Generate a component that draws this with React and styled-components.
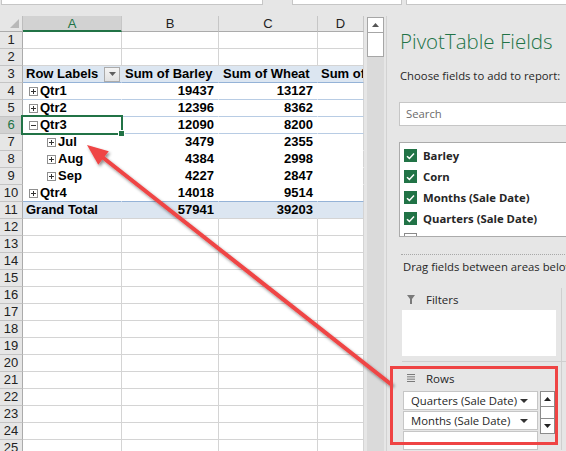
import React from 'react';
import styled, { createGlobalStyle } from 'styled-components';

const Global = createGlobalStyle`
  html, body { margin: 0; padding: 0; background: #e6e6e6; }
  body { font-family: "Liberation Sans", Arial, sans-serif; }
  #root { width: 566px; height: 451px; overflow: hidden; }
`;

const Screen = styled.div`
  position: relative;
  width: 566px;
  height: 451px;
  overflow: hidden;
  background: #e6e6e6;
`;

const TopStrip = styled.div`
  height: 16px;
  display: flex;
  align-items: flex-start;
`;

const FormulaBox = styled.div`
  box-sizing: border-box;
  height: 5px;
  width: ${p => p.$w}px;
  margin-left: ${p => p.$gap}px;
  background: #fff;
  border: 1px solid #c6c6c6;
  border-top: none;
  flex-shrink: 0;
`;

const Body = styled.div`
  display: flex;
  height: 435px;
`;

const Sheet = styled.div`
  width: 364px;
  height: 435px;
  flex-shrink: 0;
  overflow: hidden;
  display: grid;
  grid-template-columns: 23px 99px 97px 99px 46px;
  grid-template-rows: 16px;
  grid-auto-rows: 17px;
  background: #fff;
`;

const Corner = styled.div`
  box-sizing: border-box;
  background: #e6e6e6;
  border-right: 1px solid #bdbdbd;
  border-bottom: 1px solid #ababab;
  display: flex;
  align-items: flex-end;
  justify-content: flex-end;
  padding: 0 3px 3px 0;
`;

const ColHeader = styled.div`
  box-sizing: border-box;
  background: ${p => (p.$selected ? '#d2d2d2' : '#e6e6e6')};
  border-right: 1px solid #c6c6c6;
  border-bottom: ${p => (p.$selected ? '2px solid #217346' : '1px solid #ababab')};
  color: ${p => (p.$selected ? '#217346' : '#222')};
  font: 13px "Liberation Sans", Arial, sans-serif;
  display: flex;
  align-items: center;
  justify-content: center;
  padding-top: ${p => (p.$selected ? '1px' : '0')};
  overflow: hidden;
`;

const RowHeader = styled.div`
  box-sizing: border-box;
  background: ${p => (p.$selected ? '#d2d2d2' : '#e6e6e6')};
  border-right: 1px solid ${p => (p.$selected ? '#217346' : '#ababab')};
  border-bottom: 1px solid #c4c4c4;
  color: ${p => (p.$selected ? '#217346' : '#222')};
  font: 13px "Liberation Sans", Arial, sans-serif;
  display: flex;
  align-items: center;
  justify-content: center;
  line-height: 16px;
`;

const Cell = styled.div`
  box-sizing: border-box;
  position: relative;
  display: flex;
  align-items: center;
  justify-content: ${p => (p.$right ? 'flex-end' : 'flex-start')};
  padding: ${p => (p.$right ? '0 4px 0 0' : `0 0 0 ${p.$pad}px`)};
  background: ${p => p.$bg};
  border-right: 1px solid ${p => p.$vline};
  border-bottom: 1px solid ${p => p.$hline};
  font: ${p => (p.$bold ? 'bold' : 'normal')} 13px "Liberation Sans", Arial, sans-serif;
  color: #000;
  white-space: nowrap;
  overflow: ${p => (p.$clip ? 'hidden' : 'visible')};
  line-height: 16px;
`;

const Selection = styled.div`
  position: absolute;
  left: -2px;
  top: -2px;
  right: -2px;
  bottom: -2px;
  border: 2px solid #217346;
  z-index: 5;
  pointer-events: none;
  &::after {
    content: '';
    position: absolute;
    right: -4px;
    bottom: -4px;
    width: 5px;
    height: 5px;
    background: #217346;
    border: 1px solid #fff;
  }
`;

const LabelWrap = styled.div`
  display: flex;
  align-items: center;
  justify-content: space-between;
  width: 100%;
  padding-right: 1px;
`;

const FilterBtn = styled.div`
  box-sizing: border-box;
  width: 16px;
  height: 15px;
  background: linear-gradient(#f4f4f4, #e2e2e2);
  border: 1px solid #ababab;
  display: flex;
  align-items: center;
  justify-content: center;
`;

const ExpBox = styled.svg`
  width: 9px;
  height: 9px;
  margin-right: 2px;
  flex-shrink: 0;
`;

const ScrollCol = styled.div`
  width: 22px;
  flex-shrink: 0;
  padding: 1px 0 0 3px;
  box-sizing: border-box;
`;

const ScrollBar = styled.div`
  width: 17px;
  height: 100%;
  background: #dadada;
  display: flex;
  flex-direction: column;
`;

const ScrollBtn = styled.div`
  box-sizing: border-box;
  height: 16px;
  background: #fff;
  border: 1px solid #a6a6a6;
  display: flex;
  align-items: center;
  justify-content: center;
`;

const ScrollThumb = styled.div`
  box-sizing: border-box;
  height: 24px;
  background: #fff;
  border: 1px solid #a6a6a6;
  border-top: none;
`;

const Panel = styled.aside`
  width: 180px;
  box-sizing: border-box;
  border-left: 1px solid #d2d2d2;
  padding-left: 12px;
  display: flex;
  flex-direction: column;
  overflow: hidden;
  font-family: "Open Sans", "Noto Sans", sans-serif;
  color: #262626;
`;

const Title = styled.div`
  margin: 12px 0 0 1px;
  font-size: 20.5px;
  font-weight: 300;
  line-height: 26px;
  color: #217346;
  white-space: nowrap;
`;

const Subtitle = styled.div`
  margin: 14px 0 0 1px;
  font-size: 11.3px;
  line-height: 16px;
  white-space: nowrap;
`;

const Search = styled.div`
  box-sizing: border-box;
  margin-top: 18px;
  height: 24px;
  width: 180px;
  flex-shrink: 0;
  background: #fff;
  border: 1px solid #c6c6c6;
  display: flex;
  align-items: center;
  padding: 0 0 1px 6px;
  font-size: 11.3px;
  color: #6b6b6b;
`;

const FieldList = styled.div`
  box-sizing: border-box;
  margin-top: 16px;
  height: 95px;
  width: 180px;
  flex-shrink: 0;
  background: #fff;
  border: 1px solid #ababab;
  padding: 2px 0 0 4px;
  overflow: hidden;
`;

const FieldItem = styled.div`
  height: 21px;
  display: flex;
  align-items: center;
  gap: 6px;
  font-size: 11.3px;
  font-weight: 700;
  white-space: nowrap;
  color: ${p => (p.$checked ? '#262626' : '#555')};
`;

const Check = styled.div`
  box-sizing: border-box;
  width: 13px;
  height: 13px;
  flex-shrink: 0;
  background: ${p => (p.$checked ? '#217346' : '#fff')};
  border: 1px solid ${p => (p.$checked ? '#217346' : '#8a8a8a')};
  display: flex;
  align-items: center;
  justify-content: center;
`;

const Dotted = styled.div`
  margin: 17px 0 0 2px;
  width: 170px;
  border-top: 1px dotted #a8a8a8;
  flex-shrink: 0;
`;

const DragText = styled.div`
  margin: 4px 0 0 4px;
  line-height: 16px;
  font-size: 11.3px;
  white-space: nowrap;
`;

const Areas = styled.div`
  margin: 13px 0 0 3px;
  display: grid;
  grid-template-columns: 160px 20px;
  flex-shrink: 0;
`;

const FilterSection = styled.div`
  border-right: 1px solid #cfcfcf;
  border-bottom: 1px solid #cfcfcf;
  padding: 3px 0 5px 0;
`;

const RowsSection = styled.div`
  border-right: 1px solid #cfcfcf;
  padding-top: 8px;
  height: 88px;
  box-sizing: border-box;
`;

const SideArea = styled.div`
  border-bottom: ${p => (p.$line ? '1px solid #cfcfcf' : 'none')};
`;

const AreaHeader = styled.div`
  display: flex;
  align-items: center;
  height: 16px;
  padding-left: 5px;
  gap: 11px;
  font-size: 11.5px;
`;

const AreaBox = styled.div`
  margin-top: 3px;
  height: 46px;
  width: 154px;
  background: #fff;
`;

const RowsBody = styled.div`
  margin: 5px 0 0 1px;
  display: flex;
  gap: 2px;
`;

const PillStack = styled.div`
  display: flex;
  flex-direction: column;
  gap: 1px;
`;

const Pill = styled.div`
  box-sizing: border-box;
  width: 135px;
  height: 19px;
  background: #fff;
  border: 1px solid #c6c6c6;
  display: flex;
  align-items: center;
  justify-content: space-between;
  padding: 0 9px 0 7px;
  font-size: 11.3px;
  white-space: nowrap;
`;

const Spin = styled.div`
  width: 15px;
  display: flex;
  flex-direction: column;
`;

const SpinBtn = styled.div`
  box-sizing: border-box;
  height: 16px;
  background: #fff;
  border: 1px solid #8c8c8c;
  display: flex;
  align-items: center;
  justify-content: center;
`;

const SpinMid = styled.div`
  box-sizing: border-box;
  height: 11px;
  background: #fff;
  border-left: 1px solid #8c8c8c;
  border-right: 1px solid #8c8c8c;
`;

const Highlight = styled.div`
  position: absolute;
  left: 390px;
  top: 366px;
  width: 168px;
  height: 79px;
  box-sizing: border-box;
  border: 3px solid #ef4444;
  pointer-events: none;
`;

const ArrowLayer = styled.svg`
  position: absolute;
  left: 0;
  top: 0;
  width: 566px;
  height: 451px;
  pointer-events: none;
`;

const Tri = ({ up, color = '#444', w = 7, h = 4 }) => (
  <svg width={w} height={h} viewBox={`0 0 ${w} ${h}`}>
    <polygon points={up ? `0,${h} ${w},${h} ${w / 2},0` : `0,0 ${w},0 ${w / 2},${h}`} fill={color} />
  </svg>
);

const Expander = ({ open }) => (
  <ExpBox viewBox="0 0 9 9">
    <rect x="0.5" y="0.5" width="8" height="8" fill="#fff" stroke="#8f8f8f" />
    <line x1="2" y1="4.5" x2="7" y2="4.5" stroke="#333" />
    {!open && <line x1="4.5" y1="2" x2="4.5" y2="7" stroke="#333" />}
  </ExpBox>
);

const GRID = '#d4d4d4';
const BLUE_BG = '#dce6f1';

const rows = [
  { n: 1, kind: 'plain' },
  { n: 2, kind: 'plain' },
  { n: 3, kind: 'head', a: 'Row Labels', b: 'Sum of Barley', c: 'Sum of Wheat', d: 'Sum of' },
  { n: 4, kind: 'group', a: 'Qtr1', lvl: 0, b: 19437, c: 13127 },
  { n: 5, kind: 'group', a: 'Qtr2', lvl: 0, b: 12396, c: 8362 },
  { n: 6, kind: 'group', a: 'Qtr3', lvl: 0, open: true, sel: true, b: 12090, c: 8200 },
  { n: 7, kind: 'item', a: 'Jul', lvl: 1, b: 3479, c: 2355 },
  { n: 8, kind: 'item', a: 'Aug', lvl: 1, b: 4384, c: 2998 },
  { n: 9, kind: 'item', a: 'Sep', lvl: 1, b: 4227, c: 2847 },
  { n: 10, kind: 'last', a: 'Qtr4', lvl: 0, b: 14018, c: 9514 },
  { n: 11, kind: 'total', a: 'Grand Total', b: 57941, c: 39203 },
  ...Array.from({ length: 14 }, (_, i) => ({ n: 12 + i, kind: 'plain' })),
];

const style = {
  plain: { bg: '#fff', h: GRID, v: GRID },
  head: { bg: BLUE_BG, h: '#95b3d7', v: BLUE_BG },
  group: { bg: '#fff', h: '#b8cce4', v: '#fff' },
  item: { bg: '#fff', h: '#fff', v: '#fff' },
  last: { bg: '#fff', h: '#95b3d7', v: '#fff' },
  total: { bg: BLUE_BG, h: GRID, v: BLUE_BG },
};

function SheetRow({ r }) {
  const s = style[r.kind];
  const common = { $bg: s.bg, $hline: s.h, $vline: s.v, $bold: true };
  let a;
  if (r.kind === 'head') {
    a = (
      <Cell {...common} $pad={3}>
        <LabelWrap>
          <span>{r.a}</span>
          <FilterBtn><Tri w={7} h={4} color="#5f5f5f" /></FilterBtn>
        </LabelWrap>
      </Cell>
    );
  } else if (r.kind === 'total') {
    a = <Cell {...common} $pad={3}>{r.a}</Cell>;
  } else if (r.a) {
    a = (
      <Cell {...common} $pad={r.lvl ? 24 : 6}>
        <Expander open={r.open} />
        {r.a}
        {r.sel && <Selection />}
      </Cell>
    );
  } else {
    a = <Cell {...common} $pad={3} />;
  }
  const isHead = r.kind === 'head';
  return (
    <>
      <RowHeader $selected={r.sel}>{r.n}</RowHeader>
      {a}
      <Cell {...common} $right={!isHead} $pad={3}>{r.b ?? ''}</Cell>
      <Cell {...common} $right={!isHead} $pad={4}>{r.c ?? ''}</Cell>
      <Cell {...common} $vline={GRID} $pad={3} $clip>{r.d ?? ''}</Cell>
    </>
  );
}

function Arrow() {
  const tip = [87, 145];
  const tail = [392, 385];
  const dx = tail[0] - tip[0];
  const dy = tail[1] - tip[1];
  const len = Math.hypot(dx, dy);
  const ux = dx / len;
  const uy = dy / len;
  const headLen = 21;
  const half = 8.5;
  const bx = tip[0] + ux * headLen;
  const by = tip[1] + uy * headLen;
  const px = -uy;
  const py = ux;
  const head = `${tip[0]},${tip[1]} ${bx + px * half},${by + py * half} ${bx - px * half},${by - py * half}`;
  return (
    <ArrowLayer viewBox="0 0 566 451">
      <defs>
        <filter id="sh" x="-10%" y="-10%" width="130%" height="130%">
          <feDropShadow dx="1.5" dy="2" stdDeviation="1.4" floodColor="#000" floodOpacity="0.45" />
        </filter>
      </defs>
      <g filter="url(#sh)">
        <line x1={bx - ux * 2} y1={by - uy * 2} x2={tail[0]} y2={tail[1]} stroke="#ef4444" strokeWidth="4" />
        <polygon points={head} fill="#ef4444" />
      </g>
    </ArrowLayer>
  );
}

const fields = [
  { name: 'Barley', checked: true },
  { name: 'Corn', checked: true },
  { name: 'Months (Sale Date)', checked: true },
  { name: 'Quarters (Sale Date)', checked: true },
  { name: 'Years (Sale Date)', checked: false },
];

export default function App() {
  return (
    <Screen>
      <Global />
      <TopStrip>
        <FormulaBox $gap={1} $w={262} />
        <FormulaBox $gap={29} $w={110} />
        <FormulaBox $gap={4} $w={170} />
      </TopStrip>
      <Body>
        <Sheet>
          <Corner>
            <svg width="9" height="9" viewBox="0 0 9 9"><polygon points="9,0 9,9 0,9" fill="#b8b8b8" /></svg>
          </Corner>
          <ColHeader $selected>A</ColHeader>
          <ColHeader>B</ColHeader>
          <ColHeader>C</ColHeader>
          <ColHeader>D</ColHeader>
          {rows.map(r => <SheetRow key={r.n} r={r} />)}
        </Sheet>
        <ScrollCol>
          <ScrollBar>
            <ScrollBtn><Tri up w={7} h={4} color="#555" /></ScrollBtn>
            <ScrollThumb />
          </ScrollBar>
        </ScrollCol>
        <Panel>
          <Title>PivotTable Fields</Title>
          <Subtitle>Choose fields to add to report:</Subtitle>
          <Search>Search</Search>
          <FieldList>
            {fields.map(f => (
              <FieldItem key={f.name} $checked={f.checked}>
                <Check $checked={f.checked}>
                  {f.checked && (
                    <svg width="9" height="8" viewBox="0 0 9 8">
                      <path d="M1 4.2 L3.4 6.4 L8 1.6" fill="none" stroke="#fff" strokeWidth="1.5" />
                    </svg>
                  )}
                </Check>
                {f.name}
              </FieldItem>
            ))}
          </FieldList>
          <Dotted />
          <DragText>Drag fields between areas below:</DragText>
          <Areas>
            <FilterSection>
              <AreaHeader>
                <svg width="8" height="9" viewBox="0 0 8 9">
                  <polygon points="0,0 8,0 5,4 5,9 3,9 3,4" fill="#7a7a7a" />
                </svg>
                Filters
              </AreaHeader>
              <AreaBox />
            </FilterSection>
            <SideArea $line />
            <RowsSection>
              <AreaHeader>
                <svg width="8" height="8" viewBox="0 0 8 8">
                  <rect x="0" y="0" width="8" height="1" fill="#7a7a7a" />
                  <rect x="0" y="2.33" width="8" height="1" fill="#7a7a7a" />
                  <rect x="0" y="4.67" width="8" height="1" fill="#7a7a7a" />
                  <rect x="0" y="7" width="8" height="1" fill="#7a7a7a" />
                </svg>
                Rows
              </AreaHeader>
              <RowsBody>
                <PillStack>
                  <Pill>Quarters (Sale Date)<Tri w={8} h={4} color="#333" /></Pill>
                  <Pill>Months (Sale Date)<Tri w={8} h={4} color="#333" /></Pill>
                  <Pill />
                </PillStack>
                <Spin>
                  <SpinBtn><Tri up w={7} h={4} color="#222" /></SpinBtn>
                  <SpinMid />
                  <SpinBtn><Tri w={7} h={4} color="#222" /></SpinBtn>
                </Spin>
              </RowsBody>
            </RowsSection>
            <SideArea />
          </Areas>
        </Panel>
      </Body>
      <Arrow />
      <Highlight />
    </Screen>
  );
}
